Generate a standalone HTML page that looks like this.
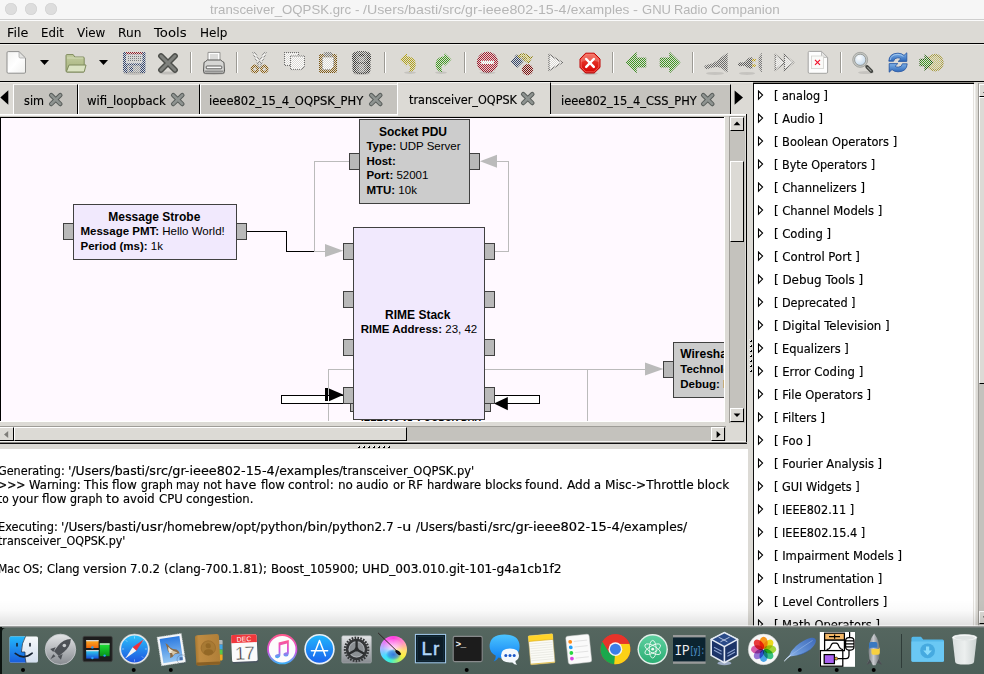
<!DOCTYPE html>
<html><head><meta charset="utf-8"><title>GNU Radio Companion</title>
<style>
html,body{margin:0;padding:0}
body{width:984px;height:674px;overflow:hidden;position:relative;background:#dcdad5;font-family:"DejaVu Sans","Liberation Sans",sans-serif;font-size:12px;color:#000}
.a{position:absolute}
.t{position:absolute;white-space:pre;line-height:14px;transform-origin:0 0;-webkit-text-stroke:.18px #000}
#titlebar{left:0;top:0;width:984px;height:19px;background:#f6f6f6;border-bottom:1px solid #cecece}
.tt{font-family:"Liberation Sans",sans-serif;font-size:13px;color:#b6b6b6;line-height:16px;-webkit-text-stroke:0}
.tl{position:absolute;top:3px;width:12px;height:12px;border-radius:50%;background:#dddddd;box-shadow:inset 0 0 0 .6px #d1d1d1}
#menubar{left:0;top:20px;width:984px;height:23px;background:#dcdad5}
.m{top:6px;font-size:12px;-webkit-text-stroke:.06px #000}
.hl{position:absolute;height:1px;left:0}
.vl{position:absolute;width:1px;top:0}
#toolbar{left:0;top:45px;width:984px;height:36px;background:#dcdad5}
.tab{position:absolute;top:85px;height:29px;background:#c5c3be;border-left:1px solid #fff;border-right:1px solid #000;border-top:1px solid #f4f3f0;box-sizing:border-box}
.tab .t{top:8px}
#canvas{left:0;top:117px;width:724px;height:304px;background:#fff9ff;overflow:hidden}
.trough{position:absolute;background:#c4c2bd}
.btn{position:absolute;background:#dcdad5;box-sizing:border-box;border-left:1px solid #fff;border-top:1px solid #fff;border-right:1px solid #000;border-bottom:1px solid #000}
#console{left:0;top:449px;width:748px;height:178px;background:#fff;overflow:hidden}

#tree{left:754px;top:84px;width:219px;height:543px;background:#fff;overflow:hidden}
.tr{position:absolute;white-space:pre;line-height:14px;transform-origin:0 0;-webkit-text-stroke:.18px #000}
#dock{left:2px;top:628px;width:990px;height:50px;background:linear-gradient(#55665f,#4b5e58);border-top-left-radius:4px}
</style></head><body>
<!-- title bar -->
<div class="a" id="titlebar">
 <div class="tl" style="left:5px"></div><div class="tl" style="left:25px"></div><div class="tl" style="left:45px"></div>
 <span class="t tt" style="left:210.15px;top:2px;transform:scaleX(1.0170);">transceiver_OQPSK.grc </span><span class="t tt" style="left:354.90px;top:2px;transform:scaleX(1.0310);">- </span><span class="t tt" style="left:363.10px;top:2px;transform:scaleX(1.0953);">/Users/basti/src/gr-ieee802-15-4</span><span class="t tt" style="left:566.50px;top:2px;transform:scaleX(1.0529);">/examples </span><span class="t tt" style="left:632.70px;top:2px;transform:scaleX(1.1442);">- </span><span class="t tt" style="left:641.80px;top:2px;transform:scaleX(1.0031);">GNU </span><span class="t tt" style="left:674.40px;top:2px;transform:scaleX(0.9846);">Radio </span><span class="t tt" style="left:711.40px;top:2px;transform:scaleX(1.0346);">Companion</span>
</div>
<!-- menu bar -->
<div class="hl" style="top:20px;width:984px;background:#fbfbfb;z-index:2"></div>
<div class="a" id="menubar">
<span class="t m" style="left:6.5px;top:6px;transform:scaleX(1.0625);">File</span><span class="t m" style="left:40.75px;top:6px;transform:scaleX(0.9828);">Edit</span><span class="t m" style="left:77.0px;top:6px;transform:scaleX(0.9953);">View</span><span class="t m" style="left:117.75px;top:6px;transform:scaleX(1.0145);">Run</span><span class="t m" style="left:154.0px;top:6px;transform:scaleX(1.1027);">Tools</span><span class="t m" style="left:200.0px;top:6px;transform:scaleX(0.9997);">Help</span>
</div>
<div class="hl" style="top:43px;width:984px;background:#000"></div>
<div class="hl" style="top:44px;width:984px;background:#efeeea"></div>
<!-- toolbar -->
<div class="a" id="toolbar"><svg class="a" style="left:0;top:-1px" width="984" height="38" viewBox="0 44 984 38">
<defs>
<pattern id="stp" width="2" height="2" patternUnits="userSpaceOnUse"><rect x="0" y="0" width="1" height="1" fill="#fff" shape-rendering="crispEdges"/><rect x="1" y="1" width="1" height="1" fill="#fff" shape-rendering="crispEdges"/></pattern>
<mask id="st" maskUnits="userSpaceOnUse" x="0" y="44" width="984" height="38"><rect x="0" y="44" width="984" height="38" fill="url(#stp)"/></mask>
<linearGradient id="gpage" x1="0" y1="0" x2="1" y2="1"><stop offset="0" stop-color="#f2f2f0"/><stop offset=".5" stop-color="#ffffff"/><stop offset="1" stop-color="#f0f0ee"/></linearGradient>
<linearGradient id="gfold" x1="0" y1="0" x2="0" y2="1"><stop offset="0" stop-color="#c3cda0"/><stop offset=".5" stop-color="#b3be8c"/><stop offset="1" stop-color="#aab584"/></linearGradient>
<linearGradient id="gred" x1="0" y1="0" x2="0" y2="1"><stop offset="0" stop-color="#f0503c"/><stop offset="1" stop-color="#d40000"/></linearGradient>
<linearGradient id="gblue" x1="0" y1="0" x2="0" y2="1"><stop offset="0" stop-color="#7fb2e8"/><stop offset="1" stop-color="#2c66b8"/></linearGradient>
<radialGradient id="glens" cx=".4" cy=".35" r=".7"><stop offset="0" stop-color="#ffffff"/><stop offset="1" stop-color="#b9d3ea"/></radialGradient>
<g id="sep"><rect x="0" y="52" width="1" height="21" fill="#9c9a94"/><rect x="1" y="52" width="1" height="21" fill="#fff"/></g>
</defs>
<!-- new -->
<path d="M8.2 51.6 H19 L25.5 58 V72 Q25.5 73.2 24.3 73.2 H8.2 Q7 73.2 7 72 V52.8 Q7 51.6 8.2 51.6 Z" fill="url(#gpage)" stroke="#8f8f8d" stroke-width="1"/>
<path d="M19 51.8 V56.8 Q19 58 20.2 58 H25.3 Z" fill="#e4e4e2" stroke="#a5a5a3" stroke-width=".7"/>
<path d="M40 60 H49 L44.5 65 Z" fill="#000"/>
<!-- open folder -->
<path d="M66 55.6 Q66 54.6 67 54.6 H73.2 L74.8 57 H83.2 Q84.2 57 84.2 58 V71 Q84.2 72 83.2 72 H67 Q66 72 66 71 Z" fill="url(#gfold)" stroke="#7e8a5c" stroke-width="1"/>
<path d="M67 58 H83.2" stroke="#d4dcb8" stroke-width="1"/><path d="M69 65 H86 L84.4 71.2 Q84.2 72 83.4 72 H67 Q66.4 72 66.6 71.2 Z" fill="#dbe3c3" stroke="#7e8a5c" stroke-width="1"/>
<path d="M99 60 H108 L103.5 65 Z" fill="#000"/>
<!-- save (insensitive) -->
<g mask="url(#st)">
<path d="M123 53 Q123 52 124 52 H144.4 Q145.4 52 145.4 53 V72 Q145.4 73 144.4 73 H125 L123 71 Z" fill="#34487c"/>
<rect x="126" y="52" width="16.4" height="2.4" fill="#b01822"/>
<rect x="126" y="54.4" width="16.4" height="9" fill="#f4f4f4"/>
<path d="M127 56.5 H141.4 M127 58.5 H141.4 M127 60.5 H141.4" stroke="#8a8a8a" stroke-width="1"/>
<rect x="127.4" y="65.4" width="13" height="7.6" fill="#bdbdbd"/>
<rect x="129.4" y="66.6" width="3.6" height="5.2" fill="#34487c"/>
<rect x="123" y="52" width="22.4" height="21" fill="#20304a" opacity=".18"/>
</g>
<ellipse cx="134" cy="73.4" rx="11" ry="1.5" fill="#000" opacity=".12"/>
<!-- close X -->
<ellipse cx="168" cy="73" rx="9" ry="1.6" fill="#000" opacity=".13"/>
<path d="M161 56 L175 70 M175 56 L161 70" stroke="#4c4e4a" stroke-width="5.8" stroke-linecap="round"/>
<path d="M161 56 L175 70 M175 56 L161 70" stroke="#7f817d" stroke-width="3" stroke-linecap="round"/>
<use href="#sep" x="190"/>
<!-- printer -->
<ellipse cx="214" cy="73.6" rx="11" ry="1.4" fill="#000" opacity=".13"/>
<path d="M208 62.5 V52.4 H220 V62.5 Z" fill="#fdfdfd" stroke="#8c8c8a" stroke-width=".9"/>
<path d="M210 55 H218 M210 57 H218 M210 59 H218" stroke="#a8a8a6" stroke-width=".8"/>
<path d="M205.4 61.6 Q204.2 61.6 204 63 L203.5 71.4 Q203.5 73.2 205.2 73.2 H222.8 Q224.5 73.2 224.5 71.4 L224 63 Q223.8 61.6 222.6 61.6 L220.6 60 H207.4 Z" fill="#d6d6d4" stroke="#555553" stroke-width="1"/>
<path d="M204.4 71.2 H223.6" stroke="#8a8a88" stroke-width="1.4"/>
<rect x="206.2" y="66" width="15.6" height="2.8" rx=".8" fill="#f8f8f8" stroke="#50504e" stroke-width=".9"/>
<use href="#sep" x="236"/>
<!-- cut / copy / paste / delete (insensitive) -->
<g mask="url(#st)">
<path d="M252.6 52.6 Q254.4 51.6 255.6 53.4 L262.4 66.4 L259.4 67.4 Z M266.4 52.6 Q264.6 51.6 263.4 53.4 L256.6 66.4 L259.6 67.4 Z" fill="#fafafa" stroke="#7c7c7c" stroke-width="1"/>
<ellipse cx="254.8" cy="69" rx="2.9" ry="3.1" fill="none" stroke="#8a5c0c" stroke-width="2.6"/>
<ellipse cx="264.3" cy="69" rx="2.9" ry="3.1" fill="none" stroke="#8a5c0c" stroke-width="2.6"/>
<rect x="284.5" y="52.5" width="14" height="13" fill="#fafafa" stroke="#6e6e6e"/>
<path d="M290.5 56 H304.5 V66.6 L301.5 69.6 H290.5 Z" fill="#fdfdfd" stroke="#6e6e6e"/>
<rect x="319.5" y="54.5" width="17" height="18" rx="1" fill="#8a6420" stroke="#76520e"/>
<path d="M322.5 57 H333.5 V66.5 L330.5 69.5 H322.5 Z" fill="#fafafa" stroke="#8a8a8a" stroke-width=".8"/>
<rect x="323.6" y="52" width="8.8" height="4.6" rx="1.8" fill="#7e7e7e"/>
<path d="M352 56 Q352 51 361.5 51 Q371 51 371 56 V59 Q371 61 369.6 62 Q370.6 63 370.6 65 V69.5 Q370.6 74 361.5 74 Q352.4 74 352.4 69.5 V65 Q352.4 63 353.4 62 Q352 61 352 59 Z" fill="#3e3e3e"/>
<path d="M356 53 Q361.5 50.6 367 53 V72 Q361.5 74 356 72 Z" fill="#6a6a6a"/>
<path d="M359 54 Q361.5 52.6 364 54 V72.6 Q361.5 73.4 359 72.6 Z" fill="#909090"/>
<ellipse cx="361.5" cy="55" rx="3" ry="1.6" fill="#2e2e2e"/>
<path d="M352.6 61.8 Q361.5 64.4 370.4 61.8" stroke="#2e2e2e" stroke-width="1.2" fill="none"/>
</g>
<ellipse cx="361.5" cy="73.3" rx="9" ry="1.6" fill="#000" opacity=".12"/>
<use href="#sep" x="384"/>
<!-- undo / redo (insensitive) -->
<g mask="url(#st)">
<path d="M400 59.5 L407 52.8 V56.3 Q415.8 57 415.8 64.5 Q415.8 70 410.5 72 Q409 72.2 409.5 70.8 Q411.5 65.5 407 63.3 V66.4 Z" fill="#b4a416"/>
<path d="M451.4 59.5 L444.4 52.8 V56.3 Q435.6 57 435.6 64.5 Q435.6 70 440.9 72 Q442.4 72.2 441.9 70.8 Q439.9 65.5 444.4 63.3 V66.4 Z" fill="#3d9a1e"/>
</g>
<ellipse cx="410" cy="72.6" rx="6" ry="1.3" fill="#000" opacity=".1"/><ellipse cx="441" cy="72.6" rx="6" ry="1.3" fill="#000" opacity=".1"/>
<use href="#sep" x="464"/>
<!-- stop / convert / play (insensitive) -->
<g mask="url(#st)">
<circle cx="487.5" cy="62.3" r="10.6" fill="#9c1226"/>
<circle cx="487.5" cy="62.3" r="8.8" fill="#b41c32"/>
<rect x="481" y="60.8" width="13" height="3.2" rx="1" fill="#fff"/>
<path d="M511 62 L516.6 54.8 L523 61.6 L517 67.4 Z" fill="#32466e" stroke="#222e4a" stroke-width=".8"/>
<circle cx="527.5" cy="69.6" r="5.6" fill="#7c0c0c"/>
<path d="M518 56 Q524 51 529.5 57.5 L532 57 L528.3 62.8 L523 58.8 L526 58.6 Q523.4 55.2 519.5 57.4 Z" fill="#d8cc5c" stroke="#8c7c00" stroke-width="1.2"/>
<path d="M549 54.4 L562.4 62.5 L549 70.6 Z" fill="#fdfdfd" stroke="#6a6a6a" stroke-width="1.3"/>
</g>
<ellipse cx="487.5" cy="72.8" rx="8" ry="1.4" fill="#000" opacity=".1"/>
<!-- kill -->
<path d="M585.6 53.2 H594.2 L600 59 V67.4 L594.2 73 H585.6 L580 67.4 V59 Z" fill="url(#gred)" stroke="#c00000" stroke-width="1"/>
<path d="M586 54.3 H593.8 L598.9 59.4 V67 L593.8 71.9 H586 L581.1 67 V59.4 Z" fill="none" stroke="#ff8a7c" stroke-width=".8" opacity=".8"/>
<path d="M586 54.4 H593.8 L598.8 59.4 V62 Q590 58.5 581.2 62 V59.4 Z" fill="#fff" opacity=".22"/>
<path d="M586.2 59 L593.8 66.8 M593.8 59 L586.2 66.8" stroke="#fff" stroke-width="2.5" stroke-linecap="round"/>
<ellipse cx="590" cy="73.6" rx="8" ry="1.3" fill="#000" opacity=".12"/>
<use href="#sep" x="612"/>
<!-- back / forward (insensitive) -->
<g mask="url(#st)">
<path d="M626 62.5 L636.2 52.4 V58 H645.8 V67 H636.2 V72.8 Z" fill="#3f9a22" stroke="#2c7a12" stroke-width=".8"/>
<path d="M680 62.5 L669.8 52.4 V58 H660.2 V67 H669.8 V72.8 Z" fill="#3f9a22" stroke="#2c7a12" stroke-width=".8"/>
</g>
<use href="#sep" x="692"/>
<!-- connect / disconnect / ff (insensitive) -->
<g mask="url(#st)">
<path d="M704.4 67.6 Q704 65.4 707 64.8 Q711 64.4 714 62.6 Q718 61 721 57.6 L727.6 52.4 V73 L722 68.6 Q719 66.6 716 67 Q711 67.6 707.6 69 Q705 69.6 704.4 67.6 Z" fill="#6a6a6a"/>
<path d="M738 64.4 Q738 62.2 740.4 62.2 Q743.5 62.8 745.6 61.6 Q748 57 752.4 57.2 V68.6 Q748 69 745.6 66.2 Q743 65.2 740.2 66.2 Q738 66.2 738 64.4 Z" fill="#5a5a5a"/>
<rect x="752.2" y="58.9" width="3.6" height="2.4" fill="#c4a000"/><rect x="752.2" y="64.4" width="3.6" height="2.4" fill="#c4a000"/>
<path d="M762 52.5 V73 L758.6 68 V57 Z" fill="#7a7a7a"/>
<path d="M775.2 54.4 L784.6 62.4 L775.2 70.4 Z M784.4 54.4 L793.6 62.4 L784.4 70.4 Z" fill="#f0f0f0" stroke="#666" stroke-width="1.2"/>
</g>
<ellipse cx="715" cy="73.4" rx="9" ry="1.5" fill="#000" opacity=".1"/><ellipse cx="747" cy="73.4" rx="8" ry="1.5" fill="#000" opacity=".1"/>
<!-- missing image -->
<path d="M809.4 51.4 H821.5 L827.6 57.4 V72 Q827.6 73.3 826.3 73.3 H809.4 Q808.2 73.3 808.2 72 V52.6 Q808.2 51.4 809.4 51.4 Z" fill="#fdfdfd" stroke="#a3a3a1" stroke-width="1"/>
<path d="M821.5 51.6 V56.2 Q821.5 57.4 822.7 57.4 H827.4 Z" fill="#e8e8e6" stroke="#a9a9a7" stroke-width=".7"/>
<rect x="811.4" y="56" width="12" height="12.6" fill="#fafaf8" stroke="#d4d4d0" stroke-width=".8"/>
<path d="M815 59.8 L820 64.8 M820 59.8 L815 64.8" stroke="#f2102a" stroke-width="1.15"/>
<use href="#sep" x="840"/>
<!-- zoom -->
<ellipse cx="866" cy="72.6" rx="8" ry="1.5" fill="#000" opacity=".1"/>
<path d="M864.2 64 L867 66.8" stroke="#8a8c88" stroke-width="1.8" stroke-linecap="round"/>
<path d="M867.2 67 L871.4 71.2" stroke="#40423e" stroke-width="3.6" stroke-linecap="round"/>
<path d="M867.6 67.4 L871 70.8" stroke="#9a9c98" stroke-width="1.1" stroke-linecap="round"/>
<circle cx="860.2" cy="59.8" r="6.6" fill="url(#glens)" stroke="#c6c8c4" stroke-width="2"/>
<circle cx="860.2" cy="59.8" r="5.6" fill="none" stroke="#8a8c88" stroke-width=".8"/>
<circle cx="860.2" cy="59.8" r="7.5" fill="none" stroke="#8a8c88" stroke-width=".6"/>
<!-- refresh -->
<path d="M888.8 61.2 Q889.2 53.2 898 53.2 Q901.8 53.2 904 55.4 L906.8 52.8 V61.4 H898.2 L900.8 58.8 Q899.6 57.8 897.8 57.8 Q894 58 893.6 61.2 Z" fill="url(#gblue)" stroke="#2050a0" stroke-width=".8" stroke-linejoin="round"/>
<path d="M907.2 63.8 Q906.8 71.8 898 71.8 Q894.2 71.8 892 69.6 L889.2 72.2 V63.6 H897.8 L895.2 66.2 Q896.4 67.2 898.2 67.2 Q902 67 902.4 63.8 Z" fill="url(#gblue)" stroke="#2050a0" stroke-width=".8" stroke-linejoin="round"/>
<path d="M890.2 60 Q891 54.6 897.8 54.4 Q901 54.4 903.4 56.4" fill="none" stroke="#b4d4f4" stroke-width=".9" opacity=".8"/>
<!-- last (insensitive) -->
<g mask="url(#st)">
<circle cx="935" cy="62.6" r="8.8" fill="#a89c3c"/><circle cx="935" cy="62.6" r="6.6" fill="#c8c070"/>
<path d="M920 59.4 H925 V55.6 L932.4 62.6 L925 69.6 V65.8 H920 Z" fill="#3f9a22" stroke="#1e5a0c" stroke-width="1.1"/>
</g>
</svg>
</div>
<div class="hl" style="top:81px;width:984px;background:#000"></div>
<div class="hl" style="top:82px;width:753px;background:#ebe9e5"></div>
<!-- tabs -->
<div class="a" id="tabs"><svg class="a" style="left:0;top:88px" width="10" height="20"><path d="M8.3 2.2 L8.3 16.8 L0.3 9.5 Z" fill="#000"/></svg>
<div class="tab" style="left:13px;width:65px;top:84px;height:30px;"><span class="t" style="left:10.3px;top:9px;transform:scaleX(0.9398);">sim</span><svg class="a" style="left:34px;top:7px" width="16" height="16"><use href="#closex"/></svg></div>
<div class="tab" style="left:78px;width:122px;top:84px;height:30px;"><span class="t" style="left:8px;top:9px;transform:scaleX(0.9739);">wifi_loopback</span><svg class="a" style="left:90.75px;top:7px" width="16" height="16"><use href="#closex"/></svg></div>
<div class="tab" style="left:200px;width:198px;top:84px;height:30px;"><span class="t" style="left:8.25px;top:9px;transform:scaleX(0.9611);">ieee802_15_4_OQPSK_PHY</span><svg class="a" style="left:167px;top:7px" width="16" height="16"><use href="#closex"/></svg></div>
<div class="tab" style="left:397px;width:154px;top:82px;height:33px;background:#dcdad5;"><span class="t" style="left:10.5px;top:10px;transform:scaleX(0.9375);">transceiver_OQPSK</span><svg class="a" style="left:122px;top:8px" width="16" height="16"><use href="#closex"/></svg></div>
<div class="tab" style="left:551px;width:180px;top:84px;height:30px;border-left:none;"><span class="t" style="left:9.5px;top:9px;transform:scaleX(0.9526);">ieee802_15_4_CSS_PHY</span><svg class="a" style="left:149.25px;top:7px" width="16" height="16"><use href="#closex"/></svg></div>
<svg class="a" style="left:733px;top:88px" width="12" height="20"><path d="M1.6 2.5 L1.6 16.8 L10 9.6 Z" fill="#000"/></svg>
<svg width="0" height="0" style="position:absolute"><defs>
<g id="closex"><path d="M3.2 3.2 L12.3 12 M12.3 3.2 L3.2 12" stroke="#565b58" stroke-width="4.5" stroke-linecap="round" fill="none"/><path d="M3.2 3.2 L12.3 12 M12.3 3.2 L3.2 12" stroke="#8e9390" stroke-width="2.5" stroke-linecap="round" fill="none"/></g>
</defs></svg>
<div class="hl" style="top:114px;width:398px;background:#fff"></div><div class="hl" style="top:114px;left:550px;width:197px;background:#fff"></div>
<div class="hl" style="top:115px;width:398px;background:#f0efec"></div><div class="hl" style="top:115px;left:550px;width:196px;background:#f0efec"></div>
<div class="hl" style="top:116px;width:729px;background:#c6c4be"></div>
<div class="vl" style="left:746px;top:114px;height:330px;background:#000"></div>
<div class="hl" style="top:441px;width:746px;background:#f6f5f2"></div>
<div class="hl" style="top:442px;width:747px;background:#8a8884"></div>
<div class="hl" style="top:443px;width:747px;background:#111"></div></div>
<!-- canvas -->
<div class="a" id="canvas"><svg class="a" style="left:0;top:0" width="725" height="305" viewBox="0 117 725 305" font-family="'Liberation Sans',sans-serif">
<g shape-rendering="crispEdges" fill="none" stroke="#bbbbbb" stroke-width="1">
 <!-- grey (disabled) connections -->
 <path d="M349 161.5 H314.5 V251.5 H326"/>
 <path d="M495 251.5 H508.5 V161.5 H496"/>
 <path d="M353 369.5 H328.5 V422"/>
 <path d="M485 369.5 H646"/>
 <path d="M587.5 369.5 V422"/>
</g>
<g shape-rendering="crispEdges" fill="none" stroke="#000" stroke-width="1">
 <path d="M247 231.5 H286.5 V251.5 H314"/>
</g>
<g fill="#bbbbbb">
 <path d="M325 244 V257 L343.2 250.8 Z"/>
 <path d="M497 154.8 V167.8 L480 161.3 Z"/>
 <path d="M645 362.6 V375.6 L663.4 369.1 Z"/>
</g>
<!-- looping black connections -->
<g shape-rendering="crispEdges">
 <rect x="281.5" y="395.5" width="62" height="8" fill="#fff" stroke="#000"/>
 <rect x="494.5" y="395.5" width="45" height="8" fill="#fff" stroke="#000"/>
 <rect x="325" y="388" width="3" height="13" fill="#000"/>
</g>
<path d="M329 388.4 V401.2 L343.6 394.8 Z" fill="#000"/>
<path d="M507.8 397 V410.2 L494 403.6 Z" fill="#000"/>
<g shape-rendering="crispEdges" stroke="#404040" stroke-width="1">
 <!-- hidden block ports -->
 <rect x="350.5" y="403.5" width="3" height="8" fill="#b9b9b9"/>
 <rect x="484.5" y="403.5" width="6" height="8" fill="#b9b9b9"/>
 <!-- Socket PDU -->
 <rect x="349.5" y="153.5" width="10" height="16" fill="#b9b9b9"/>
 <rect x="469.5" y="153.5" width="10" height="16" fill="#b9b9b9"/>
 <rect x="359.5" y="119.5" width="110" height="84" fill="#cccccc"/>
 <!-- Message Strobe -->
 <rect x="63.5" y="223.5" width="10" height="16" fill="#b9b9b9"/>
 <rect x="236.5" y="223.5" width="10" height="16" fill="#b9b9b9"/>
 <rect x="73.5" y="204.5" width="163" height="55" fill="#f1e9fd"/>
 <!-- RIME Stack -->
 <rect x="343.5" y="243.5" width="10" height="16" fill="#b9b9b9"/>
 <rect x="343.5" y="291.5" width="10" height="16" fill="#b9b9b9"/>
 <rect x="343.5" y="339.5" width="10" height="16" fill="#b9b9b9"/>
 <rect x="343.5" y="387.5" width="10" height="16" fill="#b9b9b9"/>
 <rect x="484.5" y="243.5" width="10" height="16" fill="#b9b9b9"/>
 <rect x="484.5" y="291.5" width="10" height="16" fill="#b9b9b9"/>
 <rect x="484.5" y="339.5" width="10" height="16" fill="#b9b9b9"/>
 <rect x="484.5" y="387.5" width="10" height="16" fill="#b9b9b9"/>
 <rect x="353.5" y="227.5" width="131" height="192" fill="#f1e9fd"/>
 <!-- Wireshark -->
 <rect x="663.5" y="361.5" width="10" height="16" fill="#b9b9b9"/>
 <rect x="673.5" y="342.5" width="120" height="55" fill="#cccccc"/>
</g>
<g fill="#000">
 <text x="413" y="135.8" font-size="12" font-weight="bold" text-anchor="middle">Socket PDU</text>
 <text x="366.4" y="150" font-size="11.5"><tspan font-weight="bold">Type:</tspan> UDP Server</text>
 <text x="366.4" y="164.5" font-size="11.5" font-weight="bold">Host:</text>
 <text x="366.4" y="179" font-size="11.5"><tspan font-weight="bold">Port:</tspan> 52001</text>
 <text x="366.4" y="193.5" font-size="11.5"><tspan font-weight="bold">MTU:</tspan> 10k</text>
 <text x="154.3" y="221" font-size="12" font-weight="bold" text-anchor="middle">Message Strobe</text>
 <text x="80.5" y="235" font-size="11.5"><tspan font-weight="bold">Message PMT:</tspan> Hello World!</text>
 <text x="80.5" y="249.7" font-size="11.5"><tspan font-weight="bold">Period (ms):</tspan> 1k</text>
 <text x="417.8" y="318.7" font-size="12" font-weight="bold" text-anchor="middle">RIME Stack</text>
 <text x="360.7" y="333" font-size="11.5"><tspan font-weight="bold">RIME Address:</tspan> 23, 42</text>
 <text x="680.3" y="358.2" font-size="12" font-weight="bold">Wireshark Connector</text>
 <text x="680.3" y="372.8" font-size="11.5"><tspan font-weight="bold">Technology:</tspan> ZigBee</text>
 <text x="680.3" y="387.6" font-size="11.5"><tspan font-weight="bold">Debug:</tspan> Disable</text>
 <text x="361" y="428.8" font-size="12" font-weight="bold" textLength="120" lengthAdjust="spacingAndGlyphs">IEEE802.15.4 OQPSK PHY</text>
</g>
<g shape-rendering="crispEdges"><rect x="0" y="117" width="725" height="1" fill="#000"/><rect x="0" y="117" width="1" height="305" fill="#000"/></g>
</svg>
</div>
<!-- scrollbars -->
<div id="sb"><!-- canvas light border (right/bottom) -->
<div class="vl" style="left:724px;top:117px;height:305px;background:#fff"></div>
<div class="hl" style="top:421px;width:725px;background:#fff"></div>
<!-- vertical scrollbar -->
<div class="trough" style="left:729px;top:116px;width:16px;height:307px;border-left:1px solid #9e9c97;border-top:1px solid #9e9c97;box-sizing:border-box"></div>
<div class="btn" style="left:730px;top:117px;width:14px;height:14px"><svg class="a" style="left:0;top:0" width="12" height="12"><path d="M2.6 7.2 H9.4 L6 3.4 Z" fill="#000"/></svg></div>
<div class="btn" style="left:730px;top:161px;width:14px;height:81px"></div>
<div class="btn" style="left:730px;top:408px;width:14px;height:14px"><svg class="a" style="left:0;top:0" width="12" height="12"><path d="M2.6 4.4 H9.4 L6 8 Z" fill="#000"/></svg></div>
<!-- horizontal scrollbar -->
<div class="trough" style="left:0;top:426px;width:726px;height:15px;border-top:1px solid #9e9c97;box-sizing:border-box"></div>
<div class="btn" style="left:0;top:427px;width:14px;height:14px;border-left:none"><svg class="a" style="left:0;top:0" width="13" height="12"><path d="M8.2 3 V10 L4 6.5 Z" fill="#7d7c78"/></svg></div>
<div class="btn" style="left:14px;top:427px;width:393px;height:14px"></div>
<div class="btn" style="left:711px;top:427px;width:14px;height:14px"><svg class="a" style="left:0;top:0" width="12" height="12"><path d="M4.6 3 V10 L8.6 6.5 Z" fill="#000"/></svg></div>
<!-- pane handles -->
<svg class="a" style="left:357px;top:445px" width="36" height="4" shape-rendering="crispEdges"><rect x="1" y="1" width="2" height="2" fill="#000"/><rect x="1" y="1" width="1" height="1" fill="#fff"/><rect x="0" y="0" width="1" height="1" fill="#eee"/><rect x="6" y="1" width="2" height="2" fill="#000"/><rect x="6" y="1" width="1" height="1" fill="#fff"/><rect x="5" y="0" width="1" height="1" fill="#eee"/><rect x="11" y="1" width="2" height="2" fill="#000"/><rect x="11" y="1" width="1" height="1" fill="#fff"/><rect x="10" y="0" width="1" height="1" fill="#eee"/><rect x="16" y="1" width="2" height="2" fill="#000"/><rect x="16" y="1" width="1" height="1" fill="#fff"/><rect x="15" y="0" width="1" height="1" fill="#eee"/><rect x="21" y="1" width="2" height="2" fill="#000"/><rect x="21" y="1" width="1" height="1" fill="#fff"/><rect x="20" y="0" width="1" height="1" fill="#eee"/><rect x="26" y="1" width="2" height="2" fill="#000"/><rect x="26" y="1" width="1" height="1" fill="#fff"/><rect x="25" y="0" width="1" height="1" fill="#eee"/><rect x="31" y="1" width="2" height="2" fill="#000"/><rect x="31" y="1" width="1" height="1" fill="#fff"/><rect x="30" y="0" width="1" height="1" fill="#eee"/></svg>
<svg class="a" style="left:749px;top:339px" width="4" height="36" shape-rendering="crispEdges"><rect x="1" y="1" width="2" height="2" fill="#000"/><rect x="1" y="1" width="1" height="1" fill="#fff"/><rect x="0" y="0" width="1" height="1" fill="#eee"/><rect x="1" y="6" width="2" height="2" fill="#000"/><rect x="1" y="6" width="1" height="1" fill="#fff"/><rect x="0" y="5" width="1" height="1" fill="#eee"/><rect x="1" y="11" width="2" height="2" fill="#000"/><rect x="1" y="11" width="1" height="1" fill="#fff"/><rect x="0" y="10" width="1" height="1" fill="#eee"/><rect x="1" y="16" width="2" height="2" fill="#000"/><rect x="1" y="16" width="1" height="1" fill="#fff"/><rect x="0" y="15" width="1" height="1" fill="#eee"/><rect x="1" y="21" width="2" height="2" fill="#000"/><rect x="1" y="21" width="1" height="1" fill="#fff"/><rect x="0" y="20" width="1" height="1" fill="#eee"/><rect x="1" y="26" width="2" height="2" fill="#000"/><rect x="1" y="26" width="1" height="1" fill="#fff"/><rect x="0" y="25" width="1" height="1" fill="#eee"/><rect x="1" y="31" width="2" height="2" fill="#000"/><rect x="1" y="31" width="1" height="1" fill="#fff"/><rect x="0" y="30" width="1" height="1" fill="#eee"/></svg>
</div>
<!-- console -->
<div class="a" id="console"><span class="t" style="left:-2.30px;top:15px;transform:scaleX(0.9357);">Generating: </span><span class="t" style="left:67.95px;top:15px;transform:scaleX(1.0370);">'/Users/basti</span><span class="t" style="left:144.95px;top:15px;transform:scaleX(1.0664);">/src/gr-ieee802-15-4</span><span class="t" style="left:274.70px;top:15px;transform:scaleX(1.0371);">/examples</span><span class="t" style="left:338.95px;top:15px;transform:scaleX(0.9580);">/transceiver_OQPSK.py'</span>
<span class="t" style="left:-2.30px;top:29px;transform:scaleX(0.9122);">&gt;&gt;&gt; </span><span class="t" style="left:28.70px;top:29px;transform:scaleX(0.9702);">Warning: </span><span class="t" style="left:84.20px;top:29px;transform:scaleX(0.9967);">This </span><span class="t" style="left:112.45px;top:29px;transform:scaleX(0.9989);">flow </span><span class="t" style="left:140.95px;top:29px;transform:scaleX(0.9049);">graph </span><span class="t" style="left:176.20px;top:29px;transform:scaleX(0.8926);">may </span><span class="t" style="left:202.95px;top:29px;transform:scaleX(0.9587);">not </span><span class="t" style="left:225.45px;top:29px;transform:scaleX(1.0597);">have </span><span class="t" style="left:260.70px;top:29px;transform:scaleX(0.9639);">flow </span><span class="t" style="left:288.20px;top:29px;transform:scaleX(1.0009);">control: </span><span class="t" style="left:337.70px;top:29px;transform:scaleX(0.9992);">no </span><span class="t" style="left:356.45px;top:29px;transform:scaleX(0.9777);">audio </span><span class="t" style="left:392.70px;top:29px;transform:scaleX(0.9631);">or </span><span class="t" style="left:408.20px;top:29px;transform:scaleX(0.9836);">RF </span><span class="t" style="left:426.95px;top:29px;transform:scaleX(0.9570);">hardware </span><span class="t" style="left:484.70px;top:29px;transform:scaleX(0.9724);">blocks </span><span class="t" style="left:525.45px;top:29px;transform:scaleX(0.9874);">found. </span><span class="t" style="left:566.95px;top:29px;transform:scaleX(1.0075);">Add </span><span class="t" style="left:594.20px;top:29px;transform:scaleX(0.9622);">a </span><span class="t" style="left:604.95px;top:29px;transform:scaleX(1.0075);">Misc-&gt;Throttle </span><span class="t" style="left:697.45px;top:29px;transform:scaleX(1.0096);">block</span>
<span class="t" style="left:-2.30px;top:43px;transform:scaleX(0.8819);">to </span><span class="t" style="left:11.70px;top:43px;transform:scaleX(0.9741);">your </span><span class="t" style="left:41.70px;top:43px;transform:scaleX(0.9901);">flow </span><span class="t" style="left:69.95px;top:43px;transform:scaleX(0.9242);">graph </span><span class="t" style="left:105.95px;top:43px;transform:scaleX(1.1024);">to </span><span class="t" style="left:123.45px;top:43px;transform:scaleX(0.9641);">avoid </span><span class="t" style="left:158.70px;top:43px;transform:scaleX(0.9745);">CPU </span><span class="t" style="left:186.20px;top:43px;transform:scaleX(0.9683);">congestion.</span>
<span class="t" style="left:-2.30px;top:71px;transform:scaleX(0.9473);">Executing: </span><span class="t" style="left:61.20px;top:71px;transform:scaleX(1.0101);">'/Users/basti</span><span class="t" style="left:136.20px;top:71px;transform:scaleX(1.1710);">/usr</span><span class="t" style="left:162.95px;top:71px;transform:scaleX(1.0178);">/homebrew</span><span class="t" style="left:231.70px;top:71px;transform:scaleX(1.0119);">/opt</span><span class="t" style="left:255.70px;top:71px;transform:scaleX(1.0210);">/python</span><span class="t" style="left:302.70px;top:71px;transform:scaleX(1.1057);">/bin</span><span class="t" style="left:327.70px;top:71px;transform:scaleX(1.0084);">/python2.7 </span><span class="t" style="left:397.20px;top:71px;transform:scaleX(1.1905);">-u </span><span class="t" style="left:415.95px;top:71px;transform:scaleX(0.9959);">/Users</span><span class="t" style="left:453.45px;top:71px;transform:scaleX(1.0281);">/basti</span><span class="t" style="left:487.70px;top:71px;transform:scaleX(1.0899);">/src</span><span class="t" style="left:511.20px;top:71px;transform:scaleX(1.0863);">/gr-ieee802-15-4</span><span class="t" style="left:619.95px;top:71px;transform:scaleX(1.0174);">/examples/</span>
<span class="t" style="left:-2.30px;top:85px;transform:scaleX(0.9297);">transceiver_OQPSK.py'</span>
<span class="t" style="left:-2.30px;top:113px;transform:scaleX(0.8978);">Mac </span><span class="t" style="left:22.95px;top:113px;transform:scaleX(0.9530);">OS; </span><span class="t" style="left:46.70px;top:113px;transform:scaleX(0.9512);">Clang </span><span class="t" style="left:82.95px;top:113px;transform:scaleX(0.9944);">version </span><span class="t" style="left:130.45px;top:113px;transform:scaleX(0.9823);">7.0.2 </span><span class="t" style="left:164.20px;top:113px;transform:scaleX(0.9930);">(clang-700.1.81); </span><span class="t" style="left:270.95px;top:113px;transform:scaleX(0.9754);">Boost_105900; </span><span class="t" style="left:362.20px;top:113px;transform:scaleX(1.0068);">UHD_003.010.git-101</span><span class="t" style="left:492.45px;top:113px;transform:scaleX(1.0200);">-g4a1cb1f2</span></div>
<!-- tree -->
<div class="a" id="tree"><svg class="a" style="left:3px;top:5.6px" width="8" height="11"><path d="M1.5 1 V9.2 L5.6 5.1 Z" fill="#fff" stroke="#000" stroke-width="1.1" stroke-linejoin="miter"/></svg>
<span class="tr" style="left:20px;top:5.1px;transform:scaleX(0.9373);">[ analog ]</span>
<svg class="a" style="left:3px;top:28.6px" width="8" height="11"><path d="M1.5 1 V9.2 L5.6 5.1 Z" fill="#fff" stroke="#000" stroke-width="1.1" stroke-linejoin="miter"/></svg>
<span class="tr" style="left:20px;top:28.1px;transform:scaleX(0.9568);">[ Audio ]</span>
<svg class="a" style="left:3px;top:51.6px" width="8" height="11"><path d="M1.5 1 V9.2 L5.6 5.1 Z" fill="#fff" stroke="#000" stroke-width="1.1" stroke-linejoin="miter"/></svg>
<span class="tr" style="left:20px;top:51.1px;transform:scaleX(0.9515);">[ Boolean Operators ]</span>
<svg class="a" style="left:3px;top:74.6px" width="8" height="11"><path d="M1.5 1 V9.2 L5.6 5.1 Z" fill="#fff" stroke="#000" stroke-width="1.1" stroke-linejoin="miter"/></svg>
<span class="tr" style="left:20px;top:74.1px;transform:scaleX(0.9344);">[ Byte Operators ]</span>
<svg class="a" style="left:3px;top:97.6px" width="8" height="11"><path d="M1.5 1 V9.2 L5.6 5.1 Z" fill="#fff" stroke="#000" stroke-width="1.1" stroke-linejoin="miter"/></svg>
<span class="tr" style="left:20px;top:97.1px;transform:scaleX(0.9633);">[ Channelizers ]</span>
<svg class="a" style="left:3px;top:120.6px" width="8" height="11"><path d="M1.5 1 V9.2 L5.6 5.1 Z" fill="#fff" stroke="#000" stroke-width="1.1" stroke-linejoin="miter"/></svg>
<span class="tr" style="left:20px;top:120.1px;transform:scaleX(0.9639);">[ Channel Models ]</span>
<svg class="a" style="left:3px;top:143.6px" width="8" height="11"><path d="M1.5 1 V9.2 L5.6 5.1 Z" fill="#fff" stroke="#000" stroke-width="1.1" stroke-linejoin="miter"/></svg>
<span class="tr" style="left:20px;top:143.1px;transform:scaleX(0.9696);">[ Coding ]</span>
<svg class="a" style="left:3px;top:166.6px" width="8" height="11"><path d="M1.5 1 V9.2 L5.6 5.1 Z" fill="#fff" stroke="#000" stroke-width="1.1" stroke-linejoin="miter"/></svg>
<span class="tr" style="left:20px;top:166.1px;transform:scaleX(0.9763);">[ Control Port ]</span>
<svg class="a" style="left:3px;top:189.6px" width="8" height="11"><path d="M1.5 1 V9.2 L5.6 5.1 Z" fill="#fff" stroke="#000" stroke-width="1.1" stroke-linejoin="miter"/></svg>
<span class="tr" style="left:20px;top:189.1px;transform:scaleX(0.9928);">[ Debug Tools ]</span>
<svg class="a" style="left:3px;top:212.6px" width="8" height="11"><path d="M1.5 1 V9.2 L5.6 5.1 Z" fill="#fff" stroke="#000" stroke-width="1.1" stroke-linejoin="miter"/></svg>
<span class="tr" style="left:20px;top:212.1px;transform:scaleX(0.9373);">[ Deprecated ]</span>
<svg class="a" style="left:3px;top:235.6px" width="8" height="11"><path d="M1.5 1 V9.2 L5.6 5.1 Z" fill="#fff" stroke="#000" stroke-width="1.1" stroke-linejoin="miter"/></svg>
<span class="tr" style="left:20px;top:235.1px;transform:scaleX(0.9789);">[ Digital Television ]</span>
<svg class="a" style="left:3px;top:258.6px" width="8" height="11"><path d="M1.5 1 V9.2 L5.6 5.1 Z" fill="#fff" stroke="#000" stroke-width="1.1" stroke-linejoin="miter"/></svg>
<span class="tr" style="left:20px;top:258.1px;transform:scaleX(0.9506);">[ Equalizers ]</span>
<svg class="a" style="left:3px;top:281.6px" width="8" height="11"><path d="M1.5 1 V9.2 L5.6 5.1 Z" fill="#fff" stroke="#000" stroke-width="1.1" stroke-linejoin="miter"/></svg>
<span class="tr" style="left:20px;top:281.1px;transform:scaleX(0.9701);">[ Error Coding ]</span>
<svg class="a" style="left:3px;top:304.6px" width="8" height="11"><path d="M1.5 1 V9.2 L5.6 5.1 Z" fill="#fff" stroke="#000" stroke-width="1.1" stroke-linejoin="miter"/></svg>
<span class="tr" style="left:20px;top:304.1px;transform:scaleX(0.9627);">[ File Operators ]</span>
<svg class="a" style="left:3px;top:327.6px" width="8" height="11"><path d="M1.5 1 V9.2 L5.6 5.1 Z" fill="#fff" stroke="#000" stroke-width="1.1" stroke-linejoin="miter"/></svg>
<span class="tr" style="left:20px;top:327.1px;transform:scaleX(0.9628);">[ Filters ]</span>
<svg class="a" style="left:3px;top:350.6px" width="8" height="11"><path d="M1.5 1 V9.2 L5.6 5.1 Z" fill="#fff" stroke="#000" stroke-width="1.1" stroke-linejoin="miter"/></svg>
<span class="tr" style="left:20px;top:350.1px;transform:scaleX(0.9697);">[ Foo ]</span>
<svg class="a" style="left:3px;top:373.6px" width="8" height="11"><path d="M1.5 1 V9.2 L5.6 5.1 Z" fill="#fff" stroke="#000" stroke-width="1.1" stroke-linejoin="miter"/></svg>
<span class="tr" style="left:20px;top:373.1px;transform:scaleX(0.9629);">[ Fourier Analysis ]</span>
<svg class="a" style="left:3px;top:396.6px" width="8" height="11"><path d="M1.5 1 V9.2 L5.6 5.1 Z" fill="#fff" stroke="#000" stroke-width="1.1" stroke-linejoin="miter"/></svg>
<span class="tr" style="left:20px;top:396.1px;transform:scaleX(0.9424);">[ GUI Widgets ]</span>
<svg class="a" style="left:3px;top:419.6px" width="8" height="11"><path d="M1.5 1 V9.2 L5.6 5.1 Z" fill="#fff" stroke="#000" stroke-width="1.1" stroke-linejoin="miter"/></svg>
<span class="tr" style="left:20px;top:419.1px;transform:scaleX(0.9394);">[ IEEE802.11 ]</span>
<svg class="a" style="left:3px;top:442.6px" width="8" height="11"><path d="M1.5 1 V9.2 L5.6 5.1 Z" fill="#fff" stroke="#000" stroke-width="1.1" stroke-linejoin="miter"/></svg>
<span class="tr" style="left:20px;top:442.1px;transform:scaleX(0.9429);">[ IEEE802.15.4 ]</span>
<svg class="a" style="left:3px;top:465.6px" width="8" height="11"><path d="M1.5 1 V9.2 L5.6 5.1 Z" fill="#fff" stroke="#000" stroke-width="1.1" stroke-linejoin="miter"/></svg>
<span class="tr" style="left:20px;top:465.1px;transform:scaleX(0.9643);">[ Impairment Models ]</span>
<svg class="a" style="left:3px;top:488.6px" width="8" height="11"><path d="M1.5 1 V9.2 L5.6 5.1 Z" fill="#fff" stroke="#000" stroke-width="1.1" stroke-linejoin="miter"/></svg>
<span class="tr" style="left:20px;top:488.1px;transform:scaleX(0.9536);">[ Instrumentation ]</span>
<svg class="a" style="left:3px;top:511.6px" width="8" height="11"><path d="M1.5 1 V9.2 L5.6 5.1 Z" fill="#fff" stroke="#000" stroke-width="1.1" stroke-linejoin="miter"/></svg>
<span class="tr" style="left:20px;top:511.1px;transform:scaleX(0.9612);">[ Level Controllers ]</span>
<svg class="a" style="left:3px;top:534.6px" width="8" height="11"><path d="M1.5 1 V9.2 L5.6 5.1 Z" fill="#fff" stroke="#000" stroke-width="1.1" stroke-linejoin="miter"/></svg>
<span class="tr" style="left:20px;top:534.1px;transform:scaleX(0.9558);">[ Math Operators ]</span></div>
<div class="vl" style="left:753px;top:82px;height:545px;background:#111"></div><div class="hl" style="left:753px;top:82px;width:221px;background:#8c8a84"></div><div class="hl" style="left:753px;top:83px;width:221px;background:#000"></div>
<div id="treesb"><div class="vl" style="left:973px;top:84px;height:543px;background:#e4e2de"></div><div class="vl" style="left:974px;top:84px;height:543px;background:#fcfcfb"></div><div class="vl" style="left:975px;top:84px;height:543px;background:#eae9e5"></div>
<div class="trough" style="left:978px;top:83px;width:6px;height:544px;border-left:1px solid #9e9c97;box-sizing:border-box"></div>
<div class="btn" style="left:979px;top:84px;width:14px;height:13px"><svg class="a" style="left:0;top:0" width="12" height="12"><path d="M3 8 H10 L6.5 4.2 Z" fill="#000"/></svg></div>
<div class="btn" style="left:979px;top:97px;width:14px;height:287px"></div>
<div class="btn" style="left:979px;top:611px;width:14px;height:13px"><svg class="a" style="left:0;top:0" width="12" height="12"><path d="M3 4.6 H10 L6.5 8.4 Z" fill="#000"/></svg></div></div>
<!-- dock -->
<div class="a" style="left:0;top:626px;width:984px;height:48px;background:#0b120f"></div>
<div class="a" style="left:0;top:600px;width:984px;height:26px;background:linear-gradient(rgba(0,0,0,0),rgba(0,0,0,.02) 40%,rgba(0,0,0,.12));pointer-events:none"></div>
<div class="hl" style="top:625px;width:984px;background:rgba(255,255,255,.55)"></div>
<div class="hl" style="top:626px;width:984px;background:#9a9c9b"></div><div class="hl" style="top:627px;left:2px;width:982px;background:#6e7875"></div>
<div class="a" id="dock"><div class="a" style="left:378.2px;top:8px;width:26.6px;height:26.6px;border-radius:50%;background:conic-gradient(from 0deg,#ff40e0,#ff8cc8 14%,#ffe070 27%,#fff040 34%,#b8f060 42%,#40f0d0 54%,#40e0ff 64%,#b0b4ff 77%,#ff60f0 90%,#ff40e0)"></div>
<div class="a" style="left:381px;top:10.5px;width:21px;height:21px;border-radius:50%;background:radial-gradient(circle at 48% 40%,rgba(255,255,255,.8),rgba(255,255,255,.25) 40%,rgba(255,255,255,0) 62%)"></div>
<div class="a" style="left:384px;top:21px;width:15px;height:11px;border-radius:50%;background:radial-gradient(rgba(48,112,224,.95),rgba(48,112,224,.6) 45%,rgba(64,160,240,0) 75%)"></div>
<svg class="a" style="left:-2px;top:-2px" width="984" height="48" viewBox="0 626 984 48" font-family="'Liberation Sans',sans-serif">
<defs>
<linearGradient id="dfb" x1="0" y1="0" x2="0" y2="1"><stop offset="0" stop-color="#22b8fa"/><stop offset="1" stop-color="#1a5cdc"/></linearGradient>
<linearGradient id="dfw" x1="0" y1="0" x2="0" y2="1"><stop offset="0" stop-color="#f8fafc"/><stop offset="1" stop-color="#d2deee"/></linearGradient>
<linearGradient id="dsil" x1="0" y1="0" x2="0" y2="1"><stop offset="0" stop-color="#e3e5e7"/><stop offset="1" stop-color="#878b90"/></linearGradient>
<linearGradient id="dsaf" x1="0" y1="0" x2="0" y2="1"><stop offset="0" stop-color="#2cc0fa"/><stop offset="1" stop-color="#1d55e0"/></linearGradient>
<linearGradient id="dsky" x1="0" y1="0" x2="0" y2="1"><stop offset="0" stop-color="#2c7ae0"/><stop offset="1" stop-color="#94c6f2"/></linearGradient>
<linearGradient id="dbook" x1="0" y1="0" x2="1" y2="0"><stop offset="0" stop-color="#a87830"/><stop offset=".15" stop-color="#c08c42"/><stop offset="1" stop-color="#b07f38"/></linearGradient>
<linearGradient id="ditr" x1="0" y1="0" x2="0" y2="1"><stop offset="0" stop-color="#ff5a8c"/><stop offset=".55" stop-color="#d850e0"/><stop offset="1" stop-color="#3fb0f8"/></linearGradient>
<linearGradient id="dapp" x1="0" y1="0" x2="0" y2="1"><stop offset="0" stop-color="#20b4fc"/><stop offset="1" stop-color="#1b64ee"/></linearGradient>
<linearGradient id="dmsg" x1="0" y1="0" x2="0" y2="1"><stop offset="0" stop-color="#4cc4ff"/><stop offset="1" stop-color="#0b7cf4"/></linearGradient>
<linearGradient id="datom" x1="0" y1="0" x2="0" y2="1"><stop offset="0" stop-color="#5ed0a0"/><stop offset="1" stop-color="#2cae74"/></linearGradient>
<linearGradient id="dorg" x1="0" y1="0" x2="0" y2="1"><stop offset="0" stop-color="#ffb020"/><stop offset="1" stop-color="#f06810"/></linearGradient>
<linearGradient id="dcy" x1="0" y1="0" x2="0" y2="1"><stop offset="0" stop-color="#30d8f0"/><stop offset="1" stop-color="#1850d8"/></linearGradient>
<linearGradient id="dgr" x1="0" y1="0" x2="0" y2="1"><stop offset="0" stop-color="#20e838"/><stop offset="1" stop-color="#089018"/></linearGradient>
<linearGradient id="dtr" x1="0" y1="0" x2="1" y2="0"><stop offset="0" stop-color="#e4e8e8"/><stop offset=".5" stop-color="#f8fafa"/><stop offset="1" stop-color="#d4dada"/></linearGradient>
<linearGradient id="dfea" x1="0" y1="1" x2="1" y2="0"><stop offset="0" stop-color="#b4d0f4"/><stop offset=".45" stop-color="#6694d8"/><stop offset="1" stop-color="#3c68b8"/></linearGradient>
<linearGradient id="drock" x1="0" y1="0" x2="1" y2="0"><stop offset="0" stop-color="#5e6266"/><stop offset=".45" stop-color="#c8cace"/><stop offset="1" stop-color="#4c5054"/></linearGradient>
<clipPath id="cfind"><rect x="9.4" y="636.3" width="28.6" height="26.5" rx="1.8"/></clipPath>
<clipPath id="csaf"><circle cx="134.5" cy="649" r="13.4"/></clipPath>
</defs>
<!-- finder -->
<g clip-path="url(#cfind)">
<rect x="9.4" y="636.3" width="28.6" height="26.5" fill="url(#dfw)"/>
<path d="M9.4 636.3 H25.6 Q21.6 643 21.4 652 H25 Q24.8 658 26 662.8 H9.4 Z" fill="url(#dfb)"/>
</g>
<path d="M15.2 653.4 Q23.6 660.4 32.2 653.2" fill="none" stroke="#14202e" stroke-width="1.6" stroke-linecap="round"/>
<path d="M17 643.6 V646 M30 643.6 V646" stroke="#14202e" stroke-width="1.6" stroke-linecap="round"/>
<path d="M25.6 636.3 Q21.6 643 21.4 652 H25 Q24.8 658 26 662.8" fill="none" stroke="#1b2a3a" stroke-width=".7"/>
<!-- launchpad -->
<circle cx="60.5" cy="649.4" r="15.2" fill="url(#dsil)" stroke="#c9cccf" stroke-width=".8"/>
<g transform="translate(60.5 649.4) scale(1.2) translate(-61 -649)"><path d="M69.6 640.4 Q63.4 640.6 59 646 L55.6 650.6 L59.6 654.4 L64 651 Q69.4 646.6 69.6 640.4 Z" fill="#4d5156"/>
<path d="M57 647.2 L52.4 648.6 L55 651.2 Z M62.8 652.8 L61.4 657.6 L58.8 655 Z M55 653 L52.6 657.2 L56.8 654.8 Z" fill="#4d5156"/>
<circle cx="64.2" cy="645.8" r="1.5" fill="#c8cbce"/></g>
<!-- mission control -->
<rect x="83" y="636.4" width="29.2" height="25.2" rx="1.5" fill="#1d1d1d" stroke="#3c3c3c" stroke-width=".8"/>
<rect x="86.2" y="640" width="12.4" height="8" fill="url(#dorg)"/><rect x="86.2" y="640" width="12.4" height="1.3" fill="#d8d8d8"/>
<rect x="86.2" y="650" width="12.4" height="8.6" fill="url(#dcy)"/><rect x="86.2" y="650" width="12.4" height="1.3" fill="#d8d8d8"/>
<rect x="99.8" y="643.4" width="9.8" height="12.8" fill="url(#dgr)"/><rect x="99.8" y="643.4" width="9.8" height="1.3" fill="#d8d8d8"/>
<circle cx="92.4" cy="647.4" r="1.2" fill="#28a0f8"/><circle cx="92.4" cy="658" r="1.2" fill="#28a0f8"/><circle cx="104.6" cy="655.6" r="1.2" fill="#28a0f8"/>
<!-- safari -->
<circle cx="134.5" cy="649" r="15" fill="#eceeef" stroke="#c4c6c8" stroke-width=".6"/>
<circle cx="134.5" cy="649" r="13.4" fill="url(#dsaf)"/>
<g stroke="#fff" stroke-width=".6" opacity=".7"><path d="M134.5 636.4 V638.6 M134.5 659.4 V661.6 M121.9 649 H124.1 M144.9 649 H147.1 M125.6 640.1 L127.2 641.7 M141.8 656.3 L143.4 657.9 M125.6 657.9 L127.2 656.3 M141.8 641.7 L143.4 640.1"/></g>
<path d="M143.6 639.6 L132.6 647.2 L136.4 650.8 Z" fill="#f0303c"/>
<path d="M125.4 658.4 L132.6 647.2 L136.4 650.8 Z" fill="#f4f4f4"/>
<!-- mail -->
<g transform="rotate(-9 171.4 649.6)">
<rect x="159.2" y="635.2" width="24.4" height="28.8" fill="#f4f6f8" stroke="#d8dcde" stroke-width=".6" stroke-dasharray="1.4 .8"/>
<rect x="161.4" y="637.4" width="20" height="24.4" fill="url(#dsky)"/>
<path d="M166.4 642 Q169 643.4 170.4 647.4 Q172.6 649.6 176.4 650.4 Q178.4 652 179 654.8 Q176 654 173.8 654.6 Q171.8 657.4 168.8 657.6 Q170 655.2 169.2 652.8 Q167 650.4 167.4 646.6 Q167.2 644.2 166.4 642 Z" fill="#8a6c48"/>
<path d="M168.8 646.4 Q170.4 650 173.6 651.6 Q171 653.6 168.8 652.6 Q167.8 649.6 168.8 646.4 Z" fill="#f0e8d8"/>
<path d="M171 651 Q174 651.4 177 653.4 Q174 653.6 172 655.6 Z" fill="#d8c8a8"/>
</g>
<circle cx="181.6" cy="659.4" r="4.6" fill="none" stroke="#3a4a6a" stroke-width=".7" opacity=".45"/>
<rect x="179.6" y="657.2" width="3" height="3" fill="#2c4a8a" opacity=".7"/>
<!-- contacts -->
<path d="M218.6 640 H221.8 Q222.6 640 222.6 640.8 V644.6 H218.6 Z" fill="#b4b8bc"/>
<path d="M218.6 644.6 H222.6 V649.6 H218.6 Z" fill="#3fa4e8"/>
<path d="M218.6 649.6 H222.6 V654.6 H218.6 Z" fill="#58c848"/>
<path d="M218.6 654.6 H222.6 V659.6 Q222.6 660.4 221.8 660.4 H218.6 Z" fill="#f0a820"/>
<g transform="rotate(-3 207.6 649.6)">
<rect x="195.6" y="634.6" width="24" height="30.4" rx="2.2" fill="url(#dbook)"/>
<rect x="195.6" y="662" width="24" height="3" rx="1.2" fill="#8a6024"/>
<circle cx="208.4" cy="648" r="7.2" fill="#a87a34" stroke="#98692a" stroke-width=".7"/>
<circle cx="208.4" cy="645.8" r="2.6" fill="#946826"/>
<path d="M203.4 653 Q203.8 649.4 208.4 649.4 Q213 649.4 213.4 653 Q211 655.2 208.4 655.2 Q205.8 655.2 203.4 653 Z" fill="#946826"/>
</g>
<!-- calendar -->
<g transform="rotate(-2.5 244.6 648.8)">
<rect x="232.2" y="635" width="25.6" height="28" rx="1.6" fill="#4a5560"/>
<rect x="231.6" y="634.6" width="25.6" height="27" rx="1.6" fill="#fbfbfb"/>
<path d="M231.6 636.2 Q231.6 634.6 233.2 634.6 H255.6 Q257.2 634.6 257.2 636.2 V642.6 H231.6 Z" fill="#f0383c"/>
<text x="244.4" y="641.4" font-size="6.8" fill="#fff" text-anchor="middle" letter-spacing=".1">DEC</text>
<text x="244.2" y="659.6" font-size="18.6" fill="#2c2c2c" stroke="#fbfbfb" stroke-width=".45" text-anchor="middle" letter-spacing="-.9">17</text>
</g>
<!-- itunes -->
<circle cx="282.2" cy="649.2" r="14.2" fill="#fcfcfc" stroke="url(#ditr)" stroke-width="1.8"/>
<path d="M278.6 642.4 L288.8 640 V653.4 Q288.8 656 286.2 656.4 Q283.4 656.6 283.4 654.4 Q283.6 652.4 287 652.2 V643.6 L280.4 645.2 V655.2 Q280.4 657.8 277.8 658.2 Q275 658.4 275 656.2 Q275.2 654.2 278.6 654 Z" fill="url(#ditr)"/>
<!-- app store -->
<circle cx="319.5" cy="649.2" r="15.2" fill="#e8f0f8"/>
<circle cx="319.5" cy="649.2" r="13.6" fill="url(#dapp)"/>
<path d="M319.5 640.6 L313.6 655.8 M319.5 640.6 L325.4 655.8 M311.4 650.8 H327.6" stroke="#fff" stroke-width="1.5" stroke-linecap="round" fill="none"/>
<!-- system prefs -->
<rect x="341.8" y="635.8" width="29.6" height="27.2" rx="1.4" fill="url(#dsil)" stroke="#a8acb0" stroke-width=".6"/>
<circle cx="356.6" cy="649.4" r="11.6" fill="none" stroke="#333537" stroke-width="2.4" stroke-dasharray="1.7 1.2"/>
<circle cx="356.6" cy="649.4" r="9.4" fill="#8c9094" stroke="#333537" stroke-width="2.6"/>
<circle cx="356.6" cy="649.4" r="7.6" fill="none" stroke="#c4c8cc" stroke-width=".6"/>
<path d="M356.6 649.4 L356.6 640.6 M356.6 649.4 L364.2 653.8 M356.6 649.4 L349 653.8" stroke="#2a2c2e" stroke-width="2.3"/>
<circle cx="356.6" cy="649.4" r="2.1" fill="#2a2c2e"/>
<!-- krita brush -->
<path d="M378.4 633.2 L397.4 651.6" stroke="#2a1c20" stroke-width=".95" stroke-linecap="round"/>
<path d="M396 650 Q399.6 650.4 401.2 654 Q400.6 655.6 398.6 655 Q395.6 653.6 395.2 651 Z" fill="#120c10"/>
<!-- lightroom -->
<rect x="415.4" y="634.4" width="30.2" height="28.4" fill="#0c1c28" stroke="#a4cdf0" stroke-width="1"/>
<rect x="417.4" y="636.4" width="26.2" height="24.4" fill="none" stroke="#16303e" stroke-width="1"/><text x="430.8" y="655.4" font-size="19" fill="#b0d8fa" stroke="#b0d8fa" stroke-width=".45" text-anchor="middle" letter-spacing=".9">Lr</text>
<!-- terminal -->
<rect x="453.2" y="636.4" width="29" height="25.2" rx="1.6" fill="#1c1c1c" stroke="#888a8c" stroke-width="1.1"/>
<text x="455.4" y="647" font-size="9.5" font-weight="bold" fill="#f4f4f4" font-family="'Liberation Mono',monospace" letter-spacing="-.6">&gt;_</text>
<!-- messages -->
<path d="M504.6 634.6 Q519.6 634.6 519.6 646.6 Q519.6 658.4 504.6 658.4 Q501.2 658.4 498.6 657.4 Q496.6 660.6 493.6 661.4 Q496.2 658.6 495.6 655.6 Q489.6 652.6 489.6 646.6 Q489.6 634.6 504.6 634.6 Z" fill="url(#dmsg)"/>
<path d="M510 648.6 Q519 648.6 519 655.6 Q519 659.4 515.4 661 Q515.4 663.4 517 664.8 Q514 664.6 512.4 662.4 Q511.2 662.6 510 662.6 Q501 662.6 501 655.6 Q501 648.6 510 648.6 Z" fill="#f4f8fc"/>
<circle cx="505.8" cy="655.6" r="1.5" fill="#1c58c8"/><circle cx="510" cy="655.6" r="1.5" fill="#1c58c8"/><circle cx="514.2" cy="655.6" r="1.5" fill="#1c58c8"/>
<!-- notes -->
<g transform="rotate(-5 541.5 649)">
<rect x="529.4" y="634.8" width="24.4" height="29" rx="1" fill="#fbfbf6" stroke="#c8b060" stroke-width=".5"/>
<rect x="529.4" y="634.8" width="24.4" height="5.6" fill="#ffd42a"/>
<path d="M529.4 640.4 H553.8" stroke="#d8a810" stroke-width=".6"/>
<path d="M530.4 643 H552.8 M530.4 645.4 H552.8 M530.4 647.8 H552.8 M530.4 650.2 H552.8 M530.4 652.6 H552.8 M530.4 655 H552.8 M530.4 657.4 H552.8 M530.4 659.8 H552.8" stroke="#dcdcd4" stroke-width=".5"/>
<path d="M529.4 663.2 H553.8" stroke="#e0b838" stroke-width=".8"/>
</g>
<!-- reminders -->
<g transform="rotate(-6 578.6 649)">
<rect x="567" y="635.2" width="23.4" height="28" rx="2" fill="#fafafa" stroke="#d0d0d0" stroke-width=".5"/>
<path d="M574.6 641 H588 M574.6 646.6 H588 M574.6 652.2 H588 M574.6 657.8 H588" stroke="#d8d8d8" stroke-width=".7"/>
<circle cx="571" cy="641" r="1.9" fill="#ff8a18"/><circle cx="571" cy="646.6" r="1.9" fill="#20a0f8"/><circle cx="571" cy="652.2" r="1.9" fill="#28d840"/><circle cx="571" cy="657.8" r="1.9" fill="#d848e0"/>
</g>
<!-- chrome -->
<circle cx="615.4" cy="649.2" r="15" fill="#e8332a"/>
<path d="M615.4 649.2 L602.4 641.7 A15 15 0 0 0 614.2 664.2 L621.6 652.8 Z" fill="#1aa84c"/>
<path d="M615.4 649.2 L614.2 664.2 A15 15 0 0 0 629.4 643.8 L615.4 643.8 Z" fill="#fcd116"/>
<path d="M602.4 641.7 A15 15 0 0 1 629.4 643.8 H615.4 L609.2 652.8 Z" fill="#e8332a"/>
<circle cx="615.4" cy="649.2" r="6.9" fill="#f4f4f4"/>
<circle cx="615.4" cy="649.2" r="5.5" fill="#3a7ee8"/>
<!-- atom -->
<circle cx="652.7" cy="649.2" r="15.2" fill="#e4f0ea"/>
<circle cx="652.7" cy="649.2" r="13.8" fill="url(#datom)"/>
<g fill="none" stroke="#f0faf4" stroke-width=".85"><ellipse cx="652.7" cy="649.2" rx="3.5" ry="8.8"/><ellipse cx="652.7" cy="649.2" rx="3.5" ry="8.8" transform="rotate(60 652.7 649.2)"/><ellipse cx="652.7" cy="649.2" rx="3.5" ry="8.8" transform="rotate(-60 652.7 649.2)"/></g>
<circle cx="652.7" cy="649.2" r="1.4" fill="#f0faf4"/>
<!-- ipython -->
<rect x="673" y="635" width="32.6" height="28.8" fill="#989a9a"/>
<rect x="673" y="637.4" width="32.6" height="24" fill="#0c2430"/>
<text x="674.4" y="654.6" font-size="15" fill="#f0f0f0" font-family="'Liberation Mono',monospace" textLength="15.4" lengthAdjust="spacingAndGlyphs">IP</text>
<text x="690" y="653.8" font-size="10.4" font-weight="bold" fill="#4a8cc4" font-family="'Liberation Mono',monospace" textLength="14.6" lengthAdjust="spacingAndGlyphs">[y]:</text>
<!-- virtualbox -->
<ellipse cx="724.4" cy="663.2" rx="7" ry="2" fill="#aab8d8" opacity=".85"/>
<path d="M724.4 632.6 L737.6 639.4 V655.4 L724.4 662.8 L711.2 655.4 V639.4 Z" fill="#1c3468" stroke="#e4eaf4" stroke-width="1.6" stroke-linejoin="round"/>
<path d="M724.4 632.6 L737.6 639.4 L724.4 646.6 L711.2 639.4 Z" fill="#2a4a88" stroke="#e4eaf4" stroke-width="1.6" stroke-linejoin="round"/>
<path d="M724.4 646.6 V662.8" stroke="#e4eaf4" stroke-width="1.6"/>
<path d="M718.6 637.2 L727.4 641.8 M729.6 637.2 L720.4 641.8" stroke="#c4d0e8" stroke-width="1" opacity=".9"/>
<path d="M714 647.2 L721.6 651.2 M714 650.2 L721.6 654.2" stroke="#8ea4d0" stroke-width="1.1"/>
<path d="M727.4 653.4 L735 649.2 M727.4 656.2 L735 652" stroke="#8ea4d0" stroke-width="1.1"/>
<!-- photos -->
<circle cx="763.6" cy="649.4" r="15.3" fill="#f7f7f7" stroke="#d4d4d4" stroke-width=".5"/>
<g style="isolation:isolate"><circle cx="763.6" cy="649.4" r="14" fill="#f7f7f7"/><ellipse cx="763.6" cy="642.9" rx="4.1" ry="6.1" fill="#ff9a1a" transform="rotate(0 763.6 649.4)" style="mix-blend-mode:multiply"/><ellipse cx="763.6" cy="642.9" rx="4.1" ry="6.1" fill="#f4e020" transform="rotate(45 763.6 649.4)" style="mix-blend-mode:multiply"/><ellipse cx="763.6" cy="642.9" rx="4.1" ry="6.1" fill="#a8dc3c" transform="rotate(90 763.6 649.4)" style="mix-blend-mode:multiply"/><ellipse cx="763.6" cy="642.9" rx="4.1" ry="6.1" fill="#3cc888" transform="rotate(135 763.6 649.4)" style="mix-blend-mode:multiply"/><ellipse cx="763.6" cy="642.9" rx="4.1" ry="6.1" fill="#48a8f0" transform="rotate(180 763.6 649.4)" style="mix-blend-mode:multiply"/><ellipse cx="763.6" cy="642.9" rx="4.1" ry="6.1" fill="#9c78dc" transform="rotate(225 763.6 649.4)" style="mix-blend-mode:multiply"/><ellipse cx="763.6" cy="642.9" rx="4.1" ry="6.1" fill="#e060b0" transform="rotate(270 763.6 649.4)" style="mix-blend-mode:multiply"/><ellipse cx="763.6" cy="642.9" rx="4.1" ry="6.1" fill="#f03c3c" transform="rotate(315 763.6 649.4)" style="mix-blend-mode:multiply"/></g>
<!-- feather -->
<path d="M783.8 661.6 Q786.6 657.6 789.4 655.2 Q791 650.6 796 646 Q803 640 811 637.8 Q815.4 637 816 640.6 Q815.6 645 810.4 649.4 Q803 654.6 794.6 655.8 Q791 656.4 789.8 656.6 Q786.6 659 783.8 661.6 Z" fill="url(#dfea)"/>
<path d="M784.2 661.2 Q787.6 657.6 790.6 655.4" stroke="#e4eefa" stroke-width=".9" fill="none"/>
<path d="M791 655 Q800 648.6 812.6 640.4" stroke="#9cbcea" stroke-width=".7" fill="none" opacity=".8"/>
<path d="M797 655 Q806 652.6 812.4 647.4 Q805.4 654.6 797 655.6 Z" fill="#2c54a0" opacity=".55"/>
<!-- GRC -->
<rect x="819.8" y="632" width="35.2" height="34.8" fill="#fff"/>
<g fill="none" stroke="#000" stroke-width="1.25">
<rect x="824.6" y="633.2" width="19.8" height="7" fill="#f4b868"/>
<path d="M829 636.6 H840 M834.6 634.6 V638.8"/>
<rect x="824.6" y="640.2" width="19.8" height="10.4" fill="#fff"/>
<path d="M826.6 649.6 Q829.6 649.4 830.6 646.4 Q831.6 643 833.4 643 H836.2 Q838 643 839 646.4 Q840 649.4 843 649.6"/>
<rect x="820.4" y="650.6" width="22.4" height="15.6" fill="#fff"/>
<rect x="824.2" y="654.6" width="10.2" height="9" fill="#a860f0"/>
<path d="M837.4 658.6 H846 Q849 658.6 849 655 V650"/>
<path d="M849.6 632 V638"/>
<rect x="845.6" y="637.6" width="8.4" height="12.4" rx="3.2" fill="#fff"/>
<path d="M845.6 640.8 H854 M845.6 643.8 H854 M845.6 646.8 H854"/>
</g>
<circle cx="836.2" cy="658.6" r="1.5" fill="#f4b030" stroke="#000" stroke-width=".6"/>
<!-- rocket python -->
<path d="M874.2 633.4 Q880 641 879.8 652 L879 659 L882 664.6 L877 662.6 L875.6 665.2 H872.8 L871.4 662.6 L866.4 664.6 L869.4 659 L868.6 652 Q868.4 641 874.2 633.4 Z" fill="url(#drock)"/>
<g transform="translate(874.4 648.4) scale(1.35) translate(-874.4 -647.1)"><path d="M870.4 643.6 Q870.4 642.4 871.8 642.4 H875.4 Q876.6 642.4 876.6 643.8 V646.6 H872.4 Q870.4 646.6 870.4 648.4 Z" fill="#3a78c0"/>
<path d="M878.4 650.4 Q878.4 651.8 877 651.8 H873.4 Q872.2 651.8 872.2 650.4 V647.6 H876.4 Q878.4 647.6 878.4 645.8 Z" fill="#f8d040"/></g>
<path d="M869.6 659 L866.6 664.8 L871.6 662.8 Z M878.8 659 L881.8 664.8 L876.8 662.8 Z" fill="#4a4e52"/>
<!-- separator -->
<rect x="901" y="634" width="1" height="34" fill="#2f3c39"/>
<!-- downloads -->
<path d="M911.4 638.4 Q911.4 636.8 913 636.8 H921 L923.2 639.4 H942.4 Q944 639.4 944 641 V660.2 Q944 661.8 942.4 661.8 H913 Q911.4 661.8 911.4 660.2 Z" fill="#54b8ea"/>
<path d="M911.4 641.6 H944 V660.2 Q944 661.8 942.4 661.8 H913 Q911.4 661.8 911.4 660.2 Z" fill="#6ac8f4"/>
<circle cx="927.6" cy="650.8" r="7.4" fill="#46aae0"/>
<path d="M926 646.4 H929.2 V650.4 H932 L927.6 655.2 L923.2 650.4 H926 Z" fill="#8adcfc"/>
<!-- trash -->
<path d="M952.4 637.6 Q952.4 634.6 964.6 634.6 Q976.8 634.6 976.8 637.6 L974 662 Q973.6 664.6 964.6 664.6 Q955.6 664.6 955.2 662 Z" fill="url(#dtr)" opacity=".93"/>
<ellipse cx="964.6" cy="637.6" rx="12.2" ry="3" fill="#fdfefe" stroke="#d8dede" stroke-width=".6"/>
<ellipse cx="964.6" cy="637.8" rx="10.6" ry="2.1" fill="#c4cccc" opacity=".55"/>
<!-- running dots -->
<g fill="#000"><circle cx="23" cy="670" r="2"/><circle cx="133.7" cy="670" r="2"/><circle cx="170.8" cy="670" r="2"/><circle cx="466.7" cy="670" r="2"/><circle cx="799.8" cy="670" r="2"/><circle cx="836.7" cy="670" r="2"/><circle cx="873.7" cy="670" r="2"/></g>
</svg>
</div>
</body></html>
